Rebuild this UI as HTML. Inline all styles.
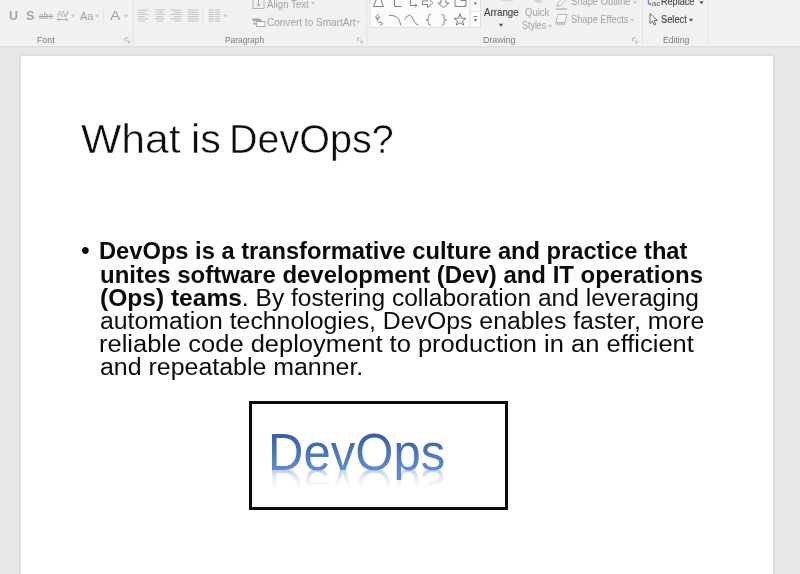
<!DOCTYPE html>
<html lang="en">
<head>
<meta charset="utf-8">
<title>What is DevOps?</title>
<style>
  html, body { margin: 0; padding: 0; }
  body {
    width: 800px; height: 574px; overflow: hidden; position: relative;
    background: #e7e7e7;
    font-family: "Liberation Sans", sans-serif;
  }
  #stage { position: absolute; left: 0; top: 0; width: 800px; height: 574px; overflow: hidden; filter: blur(0.45px); }
  /* ---------- ribbon ---------- */
  #ribbon {
    position: absolute; left: 0; top: 0; width: 800px; height: 46px;
    background: #f1f1f1;
    box-shadow: 0 1px 2px rgba(0,0,0,0.05);
  }
  .rt { position: absolute; white-space: nowrap; line-height: 12px; height: 12px; transform-origin: 0 50%; }
  .rt.mid  { color: #a2a2a2; }
  .rt.lite { color: #a2a2a2; }
  .rt.dark { color: #464646; -webkit-text-stroke: 0.15px #464646; }
  .rt.lab  { color: #7a7a7a; }
  .rt.bold { font-weight: bold; color: #a6a6a6; }
  .rt.strike { text-decoration: line-through; }
  .sep { position: absolute; width: 1px; background: #dedede; top: 0; height: 44px; }
  #ribbon svg { position: absolute; left: 0; top: 0; }
  /* ---------- slide ---------- */
  #slide {
    position: absolute; left: 21px; top: 56px; width: 752px; height: 530px;
    background: #ffffff;
    box-shadow: 0 0 3px rgba(0,0,0,0.16);
  }
  #title { margin: 0; font-weight: normal; font-size: 40.5px; }
  #title span {
    position: absolute; top: 114.1px; font-size: 40.5px; line-height: 50px; height: 50px; color: #0c0c0c;
    white-space: nowrap; transform-origin: 0 50%;
    -webkit-text-stroke: 0.5px #ffffff;
  }
  #tw1 { left: 81.37px; transform: scaleX(1.0544); }
  #tw2 { left: 190.72px; transform: scaleX(1.0228); }
  #tw3 { left: 229.49px; transform: scaleX(0.9753); }
  #word { left: 16.00px; transform: scaleX(0.9525); }
  #l1 { left: 98.76px; top: 239.40px; transform: scaleX(1.0299); }
  #l2 { left: 99.75px; top: 262.50px; transform: scaleX(1.0417); }
  #l3 { left: 99.72px; top: 285.60px; transform: scaleX(1.0672); }
  #l4 { left: 99.71px; top: 308.70px; transform: scaleX(1.0790); }
  #l5 { left: 98.67px; top: 331.80px; transform: scaleX(1.1086); }
  #l6 { left: 99.70px; top: 354.90px; transform: scaleX(1.0837); }
  #body { margin: 0; padding: 0; color: #0a0a0a; }
  #body .ln {
    position: absolute; display: block; white-space: nowrap; font-size: 23px; line-height: 24px; height: 24px;
    transform-origin: 0 50%;
  }
  #bullet { position: absolute; left: 81px; top: 238.8px; font-size: 25px; line-height: 23.2px; color: #0a0a0a; }
  /* ---------- picture ---------- */
  #pic {
    position: absolute; left: 249px; top: 401px; width: 253px; height: 103px;
    border: 3px solid #0a0a0a; background: #ffffff; overflow: hidden;
  }
  #pic .word, #pic .refl {
    position: absolute; white-space: nowrap; font-size: 51.5px; line-height: 56px; height: 56px;
    transform-origin: 0 0;
  }
  #pic .word {
    top: 19.7px;
    background: linear-gradient(#3a62a8 24%, #5f89d0 80%);
    -webkit-background-clip: text; background-clip: text; color: transparent;
    -webkit-box-reflect: below -20.8px linear-gradient(to bottom, rgba(0,0,0,0) 0, rgba(0,0,0,0) 27px, rgba(0,0,0,0.16) 38px, rgba(0,0,0,0.42) 45.7px, rgba(0,0,0,0) 45.8px);
    filter: blur(0.4px);
  }
</style>
</head>
<body>
<div id="stage">
  <div id="ribbon">
    <svg width="800" height="46" viewBox="0 0 800 46" fill="none" stroke-linecap="butt">
    <line x1="103.5" y1="8.5" x2="103.5" y2="23.5" stroke="#e3e3e3" stroke-width="1"/>
    <line x1="133" y1="0" x2="133" y2="44" stroke="#e3e3e3" stroke-width="1"/>
    <line x1="203" y1="8.5" x2="203" y2="23.5" stroke="#e3e3e3" stroke-width="1"/>
    <line x1="367" y1="0" x2="367" y2="44" stroke="#e3e3e3" stroke-width="1"/>
    <line x1="642.5" y1="0" x2="642.5" y2="44" stroke="#e3e3e3" stroke-width="1"/>
    <line x1="708" y1="0" x2="708" y2="44" stroke="#e3e3e3" stroke-width="1"/>
    <path d="M70.8 14.8 L75.2 14.8 L73 17.8 Z" fill="#c8c8c8"/>
    <path d="M94.8 14.8 L99.2 14.8 L97 17.8 Z" fill="#c8c8c8"/>
    <path d="M123.8 14.8 L128.2 14.8 L126 17.8 Z" fill="#c8c8c8"/>
    <path d="M223.3 14.8 L227.7 14.8 L225.5 17.8 Z" fill="#c8c8c8"/>
    <path d="M310.8 1.8 L315.2 1.8 L313 4.8 Z" fill="#c8c8c8"/>
    <path d="M355.8 20.8 L360.2 20.8 L358 23.8 Z" fill="#c8c8c8"/>
    <path d="M547.8 24.8 L552.2 24.8 L550 27.8 Z" fill="#c8c8c8"/>
    <path d="M632.8 1.3 L637.2 1.3 L635 4.3 Z" fill="#c8c8c8"/>
    <path d="M629.8 18.8 L634.2 18.8 L632 21.8 Z" fill="#c8c8c8"/>
    <path d="M498.8 23.8 L503.2 23.8 L501 26.8 Z" fill="#555555"/>
    <path d="M699.3 1.3 L703.7 1.3 L701.5 4.3 Z" fill="#555555"/>
    <path d="M688.8 18.8 L693.2 18.8 L691 21.8 Z" fill="#555555"/>
    <path d="M57.5 19.5 H67.5 M57.5 19.5 l2 -1.4 M57.5 19.5 l2 1.4 M67.5 19.5 l-2 -1.4 M67.5 19.5 l-2 1.4" stroke="#a8a8a8" stroke-width="0.9"/>
    <path d="M138.0 10.0 H148.5 M138.0 12.2 H144.8 M138.0 14.4 H148.5 M138.0 16.6 H144.8 M138.0 18.8 H148.5 M138.0 21.0 H144.8" stroke="#c4c4c4" stroke-width="1"/>
    <path d="M154.5 10.0 H165.0 M156.4 12.2 H163.1 M154.5 14.4 H165.0 M156.4 16.6 H163.1 M154.5 18.8 H165.0 M156.4 21.0 H163.1" stroke="#c4c4c4" stroke-width="1"/>
    <path d="M170.5 10.0 H181.5 M174.3 12.2 H181.5 M170.5 14.4 H181.5 M174.3 16.6 H181.5 M170.5 18.8 H181.5 M174.3 21.0 H181.5" stroke="#c4c4c4" stroke-width="1"/>
    <path d="M187.5 10.0 H198.5 M187.5 12.2 H198.5 M187.5 14.4 H198.5 M187.5 16.6 H198.5 M187.5 18.8 H198.5 M187.5 21.0 H198.5" stroke="#c4c4c4" stroke-width="1"/>
    <path d="M208.5 10.0 H213.8 M208.5 12.2 H213.8 M208.5 14.4 H213.8 M208.5 16.6 H213.8 M208.5 18.8 H213.8 M208.5 21.0 H213.8" stroke="#c4c4c4" stroke-width="1"/>
    <path d="M215.0 10.0 H220.2 M215.0 12.2 H220.2 M215.0 14.4 H220.2 M215.0 16.6 H220.2 M215.0 18.8 H220.2 M215.0 21.0 H220.2" stroke="#c4c4c4" stroke-width="1"/>
    <rect x="253" y="-4" width="11" height="12.5" stroke="#b4b4b4" stroke-width="1"/><path d="M258.5 -1 V6 M256.5 4 l2 2.2 l2 -2.2" stroke="#a8a8a8" stroke-width="1"/>
    <path d="M252.5 18.5 H260 L262 21 H252.5 Z" fill="#a8a8a8"/><rect x="256.5" y="21.5" width="8.5" height="5" fill="#fafafa" stroke="#adadad" stroke-width="1"/><path d="M253 23.5 l2.5 2 v-4 z" fill="#a8a8a8"/>
    <path d="M125 41.5 V38 H128.5" stroke="#b4b4b4" stroke-width="0.9"/><path d="M127 40 L129.6 42.6 M129.8 40.6 V42.8 H127.6" stroke="#b4b4b4" stroke-width="0.9"/>
    <path d="M357.5 41.5 V38 H361.0" stroke="#b4b4b4" stroke-width="0.9"/><path d="M359.5 40 L362.1 42.6 M362.3 40.6 V42.8 H360.1" stroke="#b4b4b4" stroke-width="0.9"/>
    <path d="M632.5 41.5 V38 H636.0" stroke="#b4b4b4" stroke-width="0.9"/><path d="M634.5 40 L637.1 42.6 M637.3 40.6 V42.8 H635.1" stroke="#b4b4b4" stroke-width="0.9"/>
    <rect x="370" y="-2" width="110.5" height="29.5" fill="#fcfcfc" stroke="#e0e0e0" stroke-width="1"/>
    <path d="M470 -2 V27.5 M470 11.5 H480.5" stroke="#e0e0e0" stroke-width="1"/>
    <path d="M473.7 2.5 L477.3 2.5 L475.5 5.1 Z" fill="#6a6a6a"/>
    <path d="M473.7 19.0 L477.3 19.0 L475.5 21.6 Z" fill="#6a6a6a"/>
    <path d="M473.7 16.5 H477.3" stroke="#6a6a6a" stroke-width="0.8"/>
    <g stroke="#808080" stroke-width="1" stroke-linejoin="miter"><path d="M378.5 -6 L373.5 6.5 H383.5 Z"/><path d="M394.5 -4 V6.5 H401.5"/><path d="M410.5 -4 V5.5 H416.5 M415 3.5 l2 2 l-2 2"/><path d="M422.5 1 H427.5 V-2 L433 2.7 L427.5 7.5 V4.5 H422.5 Z"/><path d="M441 -4 V3 H438 L443.5 7.5 L449 3 H446 V-4"/><path d="M455 -4 V6.5 H466 V0.5 H461 V-4"/></g>
    <g stroke="#808080" stroke-width="1" stroke-linecap="round" stroke-linejoin="round"><path d="M378.5 14.5 C376 15.5 375 17.5 376.5 18.5 C378.5 19.8 380.5 18 379.5 16.8 C378.5 15.8 376.5 19 377.5 21 C378.5 23 381 21.5 382 23 C382.8 24.2 381.5 25.5 380.5 25.2"/><path d="M389.5 15.5 C396.5 15 400 18.5 400.5 25"/><path d="M405 19.5 C406.5 15.5 410 13.5 412 17 C414 20.5 414.5 24 418 25"/><path d="M430.5 14.5 C427.5 14.5 428.5 16.5 428.5 18 C428.5 19.5 427.5 19.8 426 19.8 C427.5 19.8 428.5 20.2 428.5 21.5 C428.5 23.5 427.5 25.2 430.5 25.2"/><path d="M442 14.5 C445 14.5 444 16.5 444 18 C444 19.5 445 19.8 446.5 19.8 C445 19.8 444 20.2 444 21.5 C444 23.5 445 25.2 442 25.2"/><path d="M460 14 L461.6 18.2 L466 18.3 L462.5 21 L463.8 25.2 L460 22.7 L456.2 25.2 L457.5 21 L454 18.3 L458.4 18.2 Z"/></g>
    <path d="M501 -1 H513 V1.5 H501 Z" fill="#dadada"/><path d="M533 -1 L543 -1 L541 3.5 L535 2 Z" fill="#d4d4d4"/>
    <path d="M557 6.5 L558 3 L563.5 -3 L566 -0.5 L560.5 5.5 Z" stroke="#b8b8b8" stroke-width="1" fill="#f7f7f7"/><path d="M556 9 H567" stroke="#c0c0c0" stroke-width="1.6"/>
    <path d="M556 22.5 L558 14.5 H567 L565 22.5 Z" stroke="#b4b4b4" stroke-width="1" fill="#fafafa"/><ellipse cx="560.5" cy="24" rx="5.5" ry="1.3" fill="#cccccc"/>
    <path d="M648.3 -2 V4 H651 M649.6 2.6 l1.5 1.4 l-1.5 1.4" stroke="#5577cc" stroke-width="1"/><path d="M653 -1 h5" stroke="#8a6fc0" stroke-width="1.4"/>
    <path d="M650 13.5 V23.5 L652.6 21.2 L654.3 25 L655.8 24.3 L654.1 20.6 L657.3 20.4 Z" stroke="#5a5a5a" stroke-width="0.9" fill="#ffffff" stroke-linejoin="round"/>
    </svg>
    <span class="rt" style="left:651.8px;top:-2.1px;font-size:8px;color:#555555">ac</span>
    <span class="rt mid bold" id="t_u" style="left:9.1px;top:9.8px;font-size:12.6px;transform:scaleX(0.9990)">U</span>
    <span class="rt mid bold" id="t_s" style="left:25.9px;top:9.8px;font-size:12.6px;transform:scaleX(0.9993)">S</span>
    <span class="rt mid strike" id="t_abc" style="left:39.4px;top:10.4px;font-size:8.8px;transform:scaleX(0.9938)">abc</span>
    <span class="rt mid" id="t_av" style="left:56.9px;top:8.4px;font-size:9.8px;transform:scaleX(0.9316)">AV</span>
    <span class="rt mid" id="t_aa" style="left:80px;top:10.0px;font-size:11.6px;transform:scaleX(0.9445)">Aa</span>
    <span class="rt mid" id="t_a" style="left:110px;top:9.8px;font-size:13.4px;transform:scaleX(1.1636)">A</span>
    <span class="rt lab" id="t_font" style="left:36.8px;top:33.8px;font-size:9.6px;transform:scaleX(0.9165)">Font</span>
    <span class="rt lab" id="t_para" style="left:224.9px;top:33.8px;font-size:9.6px;transform:scaleX(0.8725)">Paragraph</span>
    <span class="rt lite" id="t_align" style="left:267.1px;top:-0.9px;font-size:10px;transform:scaleX(0.9679)">Align Text</span>
    <span class="rt lite" id="t_conv" style="left:267.1px;top:16.9px;font-size:10.3px;transform:scaleX(0.9727)">Convert to SmartArt</span>
    <span class="rt dark" id="t_arr" style="left:484.4px;top:7.0px;font-size:10px;transform:scaleX(0.9753)">Arrange</span>
    <span class="rt lite" id="t_quick" style="left:524.6px;top:7.0px;font-size:10px;transform:scaleX(0.9506)">Quick</span>
    <span class="rt lite" id="t_styles" style="left:521.6px;top:19.8px;font-size:10px;transform:scaleX(0.8923)">Styles</span>
    <span class="rt lab" id="t_draw" style="left:483.1px;top:34.0px;font-size:9.6px;transform:scaleX(0.9232)">Drawing</span>
    <span class="rt lite" id="t_so" style="left:570.6px;top:-4.2px;font-size:10px;transform:scaleX(0.9355)">Shape Outline</span>
    <span class="rt lite" id="t_se" style="left:570.6px;top:13.6px;font-size:10px;transform:scaleX(0.9260)">Shape Effects</span>
    <span class="rt dark" id="t_rep" style="left:661.3px;top:-4.3px;font-size:10px;transform:scaleX(0.9073)">Replace</span>
    <span class="rt dark" id="t_sel" style="left:661.3px;top:13.5px;font-size:10px;transform:scaleX(0.9282)">Select</span>
    <span class="rt lab" id="t_edit" style="left:663px;top:33.8px;font-size:9.6px;transform:scaleX(0.8997)">Editing</span>
  </div>
  <div id="slide"></div>

  <h1 id="title"><span id="tw1">What</span> <span id="tw2">is</span> <span id="tw3">DevOps?</span></h1>

  <span id="bullet">&bull;</span>
  <p id="body">
    <span class="ln" id="l1"><b>DevOps is a transformative culture and practice that</b></span>
    <span class="ln" id="l2"><b>unites software development (Dev) and IT operations</b></span>
    <span class="ln" id="l3"><b>(Ops) teams</b>. By fostering collaboration and leveraging</span>
    <span class="ln" id="l4">automation technologies, DevOps enables faster, more</span>
    <span class="ln" id="l5">reliable code deployment to production in an efficient</span>
    <span class="ln" id="l6">and repeatable manner.</span>
  </p>

  <div id="pic">
    <span class="word" id="word">DevOps</span>
  </div>
</div>
</body>
</html>
